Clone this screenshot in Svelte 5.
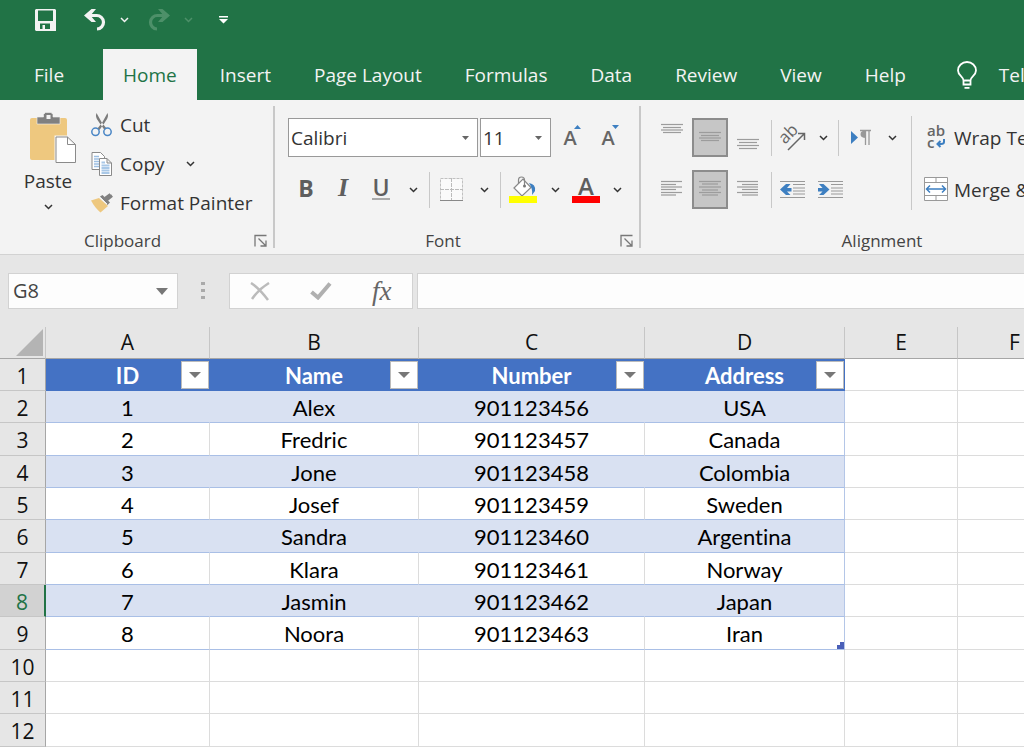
<script>
  const tabs = ["File", "Home", "Insert", "Page Layout", "Formulas", "Data", "Review", "View", "Help"];
  const columns = ["A", "B", "C", "D", "E", "F"];
  const fields = ["ID", "Name", "Number", "Address"];
  const people = [
    [1, "Alex", 901123456, "USA"],
    [2, "Fredric", 901123457, "Canada"],
    [3, "Jone", 901123458, "Colombia"],
    [4, "Josef", 901123459, "Sweden"],
    [5, "Sandra", 901123460, "Argentina"],
    [6, "Klara", 901123461, "Norway"],
    [7, "Jasmin", 901123462, "Japan"],
    [8, "Noora", 901123463, "Iran"]
  ];
  const emptyRows = [10, 11, 12];

  let activeTab = $state("Home");
  let cell = $state("G8");
  let formula = $state("");
  let vertical = $state("middle");
  let horizontal = $state("center");

  const selectedRow = $derived(Number(cell.replace(/\D/g, "")));
</script>

{#snippet chevron()}
  <svg width="9" height="6" viewBox="0 0 9 6"><path d="M1 1l3.500 3.500L8 1" fill="none" stroke="currentColor" stroke-width="1.500" /></svg>
{/snippet}

{#snippet more(label)}
  <button class="more" aria-label={label}>{@render chevron()}</button>
{/snippet}

{#snippet launcher(label)}
  <button class="launcher" aria-label={label}>
    <svg width="14" height="14" viewBox="0 0 14 14" fill="none" stroke="#777" stroke-width="1.300">
      <path d="M1 12.500V1.500H12.500M4.500 4.500l7 7M12 6.500V12H6.500" />
    </svg>
  </button>
{/snippet}

{#snippet lines(rows)}
  <svg width="22" height="40" viewBox="0 0 22 40" stroke="#9c9c9c" stroke-width="1.200">
    {#each rows as [x1, x2, y]}
      <path d="M{x1} {y}H{x2}" />
    {/each}
  </svg>
{/snippet}

<div class="app">
  <header>
    <div class="quick">
      <button aria-label="Save">
        <svg width="22" height="22" viewBox="0 0 22 22">
          <path fill="#f3f3f3" fill-rule="evenodd" d="M1 0H20L21 1V22H1L0 21V1ZM3 1.500V12H18V1.500ZM5 14.500V20H7.500V16H10V20H15V14.500Z" />
        </svg>
      </button>
      <button class="undo" aria-label="Undo">
        <svg width="22" height="22" viewBox="0 0 22 22">
          <path d="M5 6.500H12.500A6.500 6.500 0 0 1 13 20" fill="none" stroke="#f3f3f3" stroke-width="3.200" />
          <path d="M7.500 0H12L6.500 6.500 12 13H7.500L0 6.500Z" fill="#f3f3f3" />
        </svg>
      </button>
      <button class="drop" aria-label="Undo history">{@render chevron()}</button>
      <button class="redo" aria-label="Redo" disabled>
        <svg width="22" height="22" viewBox="0 0 22 22">
          <path d="M17 6.500H9.500A6.500 6.500 0 0 0 9 20" fill="none" stroke="#4d9069" stroke-width="3.200" />
          <path d="M14.500 0H10L15.500 6.500 10 13H14.500L22 6.500Z" fill="#4d9069" />
        </svg>
      </button>
      <button class="drop faded" aria-label="Redo history" disabled>{@render chevron()}</button>
      <button class="customize" aria-label="Customize toolbar">
        <svg width="9" height="8" viewBox="0 0 9 8" fill="#fff"><path d="M0 0h9v1.500H0zM0 3h9L4.500 7.500z" /></svg>
      </button>
    </div>
    <nav>
      {#each tabs as tab}
        <button class="tab" class:active={tab === activeTab} onclick={() => (activeTab = tab)}>{tab}</button>
      {/each}
      <button class="tell">
        <svg width="20" height="28" viewBox="0 0 20 28" fill="none" stroke="#fff" stroke-width="1.800">
          <path d="M6.500 19.500C6.500 15.500 1 14.500 1 9.500a9 8.500 0 0 1 18 0C19 14.500 13.500 15.500 13.500 19.500V23.500H6.500ZM6.500 19.500H13.500M7.500 26.800H12.500" />
        </svg>
        Tell me
      </button>
    </nav>
  </header>

  <div class="ribbon">
    <section class="group clipboard">
      <div class="body">
        <button class="paste">
          <svg width="46" height="52" viewBox="0 0 46 52">
            <rect x="0" y="6" width="37" height="42" rx="2" fill="#eec87f" />
            <path d="M7 5H13.500V2.500L15.500 0.500H21L23 2.500V5H30V12H7Z" fill="#808080" stroke="#f3f3f3" stroke-width="0.600" />
            <rect x="16.500" y="3" width="4" height="4" fill="#f3f3f3" />
            <path d="M26 25H38L45.500 32.500V50.500H26Z" fill="#fff" stroke="#f3f3f3" stroke-width="3" />
            <path d="M26 25H37.500L45.500 32.500V50.500H26ZM37.500 25V32.500H45.500" fill="#fff" stroke="#8a8a8a" />
          </svg>
          <span>Paste</span>
          {@render chevron()}
        </button>
        <div class="stack">
          <button>
            <svg width="22" height="24" viewBox="0 0 22 24">
              <path d="M5.500 0C4 4 6 6 8.500 10L13.500 17 15.500 15.500 10.500 9ZM16.500 0C18 4 16 6 13.500 10L8.500 17 6.500 15.500 11.500 9Z" fill="#7b7b7b" />
              <circle cx="4.500" cy="18.800" r="3.700" fill="none" stroke="#4a86c5" stroke-width="1.500" />
              <circle cx="16.500" cy="18.800" r="3.700" fill="none" stroke="#4a86c5" stroke-width="1.500" />
            </svg>
            Cut
          </button>
          <button>
            <svg width="22" height="24" viewBox="0 0 22 24">
              <path d="M1 .5H9.500L13.500 4.500V17.500H1Z" fill="#fff" stroke="#8a8a8a" />
              <path d="M3 4.500H8M3 7H8M3 9.500H8M3 12H8M3 14.500H8" stroke="#9dbfe2" stroke-width="1.500" />
              <path d="M8.500 6.500H16L20.500 11V23.500H8.500ZM16 6.500V11H20.500" fill="#fff" stroke="#8a8a8a" />
              <path d="M10.500 10.500H14M10.500 13.500H18.500M10.500 16H18.500M10.500 18.500H18.500M10.500 21H18.500" stroke="#a9c8e7" stroke-width="2" />
            </svg>
            Copy
            <span class="copy-more">{@render chevron()}</span>
          </button>
          <button>
            <svg width="22" height="20" viewBox="0 0 22 20">
              <path d="M0 7.500L8 5 17 13 9.500 19.500Q4 15 0 7.500Z" fill="#eec87f" />
              <path d="M9 3.500L11.500 2 19 9.500 16.500 12Z" fill="#808080" />
              <path d="M14 5.500L19.500 1.500M15.500 7L21 2.500" stroke="#808080" stroke-width="3" />
              <path d="M9.500 4.500L16 11" stroke="#f3f3f3" />
            </svg>
            Format Painter
          </button>
        </div>
      </div>
      <footer><span>Clipboard</span>{@render launcher("Clipboard settings")}</footer>
    </section>

    <section class="group font">
      <div class="body rows">
        <div class="row">
          <label class="picker family">
            <select aria-label="Font name"><option>Calibri</option></select>
            <svg width="7" height="4" viewBox="0 0 7 4"><path d="M0 0h7L3.500 4z" fill="#666" /></svg>
          </label>
          <label class="picker size">
            <select aria-label="Font size"><option>11</option></select>
            <svg width="7" height="4" viewBox="0 0 7 4"><path d="M0 0h7L3.500 4z" fill="#666" /></svg>
          </label>
          <button class="scale" aria-label="Increase font size">
            <span>A</span><svg width="7" height="4" viewBox="0 0 7 4"><path d="M0 4h7L3.500 0z" fill="#3d7fc1" /></svg>
          </button>
          <button class="scale" aria-label="Decrease font size">
            <span>A</span><svg width="7" height="4" viewBox="0 0 7 4"><path d="M0 0h7L3.500 4z" fill="#3d7fc1" /></svg>
          </button>
        </div>
        <div class="row">
          <button class="w36 bold">B</button>
          <button class="w38 italic">I</button>
          <button class="w38 underline"><span>U</span></button>
          {@render more("Underline styles")}
          <i class="sep"></i>
          <button class="w38" aria-label="Borders">
            <svg width="24" height="24" viewBox="0 0 24 24" fill="none">
              <rect x=".5" y=".5" width="22" height="22" fill="#fafafa" stroke="#c0c0c0" stroke-dasharray="3 1" />
              <path d="M11.500 0V22M0 11.500H23" stroke="#bbb" stroke-dasharray="4 1" />
              <path d="M0 22.500H23" stroke="#888" />
            </svg>
          </button>
          {@render more("Border styles")}
          <i class="sep"></i>
          <button class="w38" aria-label="Fill color">
            <svg width="28" height="28" viewBox="0 0 28 28">
              <path d="M5 12L14 3 22 11.500 13 20Z" fill="#fff" stroke="#888" stroke-width="1.200" />
              <path d="M9.500 8V4Q9.500 1 12.500 1T15.500 4V10" fill="none" stroke="#888" stroke-width="1.200" />
              <circle cx="15.500" cy="10" r="1.500" fill="#777" />
              <path d="M20 7Q27 8 26 15L23 19Q24 13 20 7Z" fill="#3d7fc1" />
              <rect y="20" width="28" height="7" fill="#ff0" />
            </svg>
          </button>
          {@render more("Fill colors")}
          <button class="w36 color" aria-label="Font color"><span>A</span></button>
          {@render more("Font colors")}
        </div>
      </div>
      <footer><span>Font</span>{@render launcher("Font settings")}</footer>
    </section>

    <section class="group alignment">
      <div class="body">
        <div class="rows">
          <div class="row">
            <button class="w40" class:on={vertical === "top"} aria-label="Top align" onclick={() => (vertical = "top")}>
              {@render lines([[0, 22, 6.5], [2, 20, 9.5], [0, 22, 12], [2, 20, 14.5]])}
            </button>
            <button class="w36" class:on={vertical === "middle"} aria-label="Middle align" onclick={() => (vertical = "middle")}>
              {@render lines([[0, 22, 14.5], [2, 20, 17.5], [0, 22, 20], [2, 20, 22.5]])}
            </button>
            <button class="w40" class:on={vertical === "bottom"} aria-label="Bottom align" onclick={() => (vertical = "bottom")}>
              {@render lines([[0, 22, 21.5], [2, 20, 24.5], [0, 22, 27.5], [2, 20, 30.5]])}
            </button>
            <i class="sep"></i>
            <button class="w36" aria-label="Orientation">
              <svg width="26" height="26" viewBox="0 0 26 26">
                <text x="3" y="19" transform="rotate(-45 5 17)" font-family="Open Sans, sans-serif" font-size="17" fill="#666">ab</text>
                <path d="M8 25L24 9M18 8.500H24.500V15" fill="none" stroke="#666" stroke-width="1.500" />
              </svg>
            </button>
            {@render more("Orientation options")}
            <i class="sep"></i>
            <button class="w38" aria-label="Text direction">
              <svg width="22" height="18" viewBox="0 0 22 18">
                <path d="M1 2L8 8.500 1 15Z" fill="#3d7fc1" />
                <path d="M15 2H16V9Q10.500 9 10.500 5.200T16 1.500Z" fill="#999" />
                <path d="M10 1.500H21M15.500 2V16M19 2V16" fill="none" stroke="#999" stroke-width="1.300" />
              </svg>
            </button>
            {@render more("Text direction options")}
          </div>
          <div class="row">
            <button class="w40" class:on={horizontal === "left"} aria-label="Align left" onclick={() => (horizontal = "left")}>
              {@render lines([[0, 21, 11.5], [0, 15, 14.5], [0, 21, 17], [0, 15, 19.5], [0, 21, 22.5], [0, 15, 25]])}
            </button>
            <button class="w36" class:on={horizontal === "center"} aria-label="Center" onclick={() => (horizontal = "center")}>
              {@render lines([[0, 22, 11.5], [3, 19, 14], [0, 22, 17], [3, 19, 20], [0, 22, 22.5], [3, 19, 25]])}
            </button>
            <button class="w40" class:on={horizontal === "right"} aria-label="Align right" onclick={() => (horizontal = "right")}>
              {@render lines([[0, 21, 11.5], [5, 21, 14.5], [0, 21, 17], [5, 21, 19.5], [0, 21, 22.5], [5, 21, 25]])}
            </button>
            <i class="sep"></i>
            <button class="w36" aria-label="Decrease indent">
              <svg width="26" height="20" viewBox="0 0 26 20">
                <path d="M0 1.500H25M13 4.500H25M13 8H25M13 11H25M13 14H25M0 17.500H25" stroke="#999" stroke-width="1.200" />
                <path d="M0 9.500L6 4H10.500L7 8H11.500V11.500H7L10.500 15H6Z" fill="#3d7fc1" />
              </svg>
            </button>
            <button class="w40" aria-label="Increase indent">
              <svg width="26" height="20" viewBox="0 0 26 20">
                <path d="M0 1.500H25M13 4.500H25M13 8H25M13 11H25M13 14H25M0 17.500H25" stroke="#999" stroke-width="1.200" />
                <path d="M11.500 9.500L5.500 4H1L4.500 8H0V11.500H4.500L1 15H5.500Z" fill="#3d7fc1" />
              </svg>
            </button>
          </div>
        </div>
        <div class="rows wide">
          <button>
            <svg width="24" height="28" viewBox="0 0 24 28">
              <text font-family="Open Sans, sans-serif" font-weight="600" font-size="15" fill="#666">
                <tspan x="3" y="12">ab</tspan><tspan x="3" y="24">c</tspan>
              </text>
              <path d="M20 15V18Q20 20 17 20H14M16.500 17L13.500 20 16.500 23" fill="none" stroke="#3d7fc1" stroke-width="2" />
            </svg>
            Wrap Text
          </button>
          <button>
            <svg width="24" height="26" viewBox="0 0 24 26" fill="none">
              <path d="M.5 .5H23.500V23.500H.5ZM.5 5.500H23.500M.5 18.500H23.500M12 .5V5.500M12 18.500V23.500" fill="#fff" stroke="#999" />
              <path d="M2.500 12H21.500M6 8.500L2.500 12 6 15.500M18 8.500L21.500 12 18 15.500" stroke="#3d7fc1" stroke-width="1.500" />
            </svg>
            Merge &amp; Center
          </button>
        </div>
      </div>
      <footer><span>Alignment</span>{@render launcher("Alignment settings")}</footer>
    </section>
  </div>

  <div class="formula-bar">
    <div class="name-box">
      <input aria-label="Name box" bind:value={cell} />
      <button aria-label="Named ranges">
        <svg width="12" height="7" viewBox="0 0 12 7"><path d="M0 0h12L6 7z" fill="#777" /></svg>
      </button>
    </div>
    <svg class="dots" width="4" height="18" viewBox="0 0 4 18" fill="#aaa"><path d="M0 0h4v3H0zM0 7h4v3H0zM0 14h4v3H0z" /></svg>
    <div class="actions">
      <button aria-label="Cancel">
        <svg width="20" height="19" viewBox="0 0 20 19"><path d="M1 1Q9 6 18 18M19 1Q9 7 2 17" fill="none" stroke="#bbb" stroke-width="2.500" /></svg>
      </button>
      <button aria-label="Enter">
        <svg width="22" height="18" viewBox="0 0 22 18"><path d="M1.500 10L8 15.500 20 1.500" fill="none" stroke="#b0b0b0" stroke-width="4" /></svg>
      </button>
      <button class="fx">fx</button>
    </div>
    <input class="formula" aria-label="Formula" bind:value={formula} />
  </div>

  <table>
    <colgroup>
      <col class="head" />
      {#each columns as name}
        <col class={name} />
      {/each}
    </colgroup>
    <thead>
      <tr>
        <td class="corner"><svg width="27" height="27" viewBox="0 0 27 27"><path d="M27 0V27H0z" fill="#b4b4b4" /></svg></td>
        {#each columns as name}
          <th scope="col">{name}</th>
        {/each}
      </tr>
    </thead>
    <tbody>
      <tr>
        <th scope="row">1</th>
        {#each fields as field}
          <td class="field">
            {field}
            <button aria-label="Filter {field}">
              <svg width="12" height="6" viewBox="0 0 12 6"><path d="M0 0h12L6 6z" fill="#777" /></svg>
            </button>
          </td>
        {/each}
        <td></td>
        <td></td>
      </tr>
      {#each people as person, i}
        <tr class:band={i % 2 === 0}>
          <th scope="row" class:selected={selectedRow === i + 2}>{i + 2}</th>
          {#each person as value}
            <td class="data">{value}</td>
          {/each}
          <td></td>
          <td></td>
        </tr>
      {/each}
      {#each emptyRows as n}
        <tr>
          <th scope="row">{n}</th>
          {#each columns as _}
            <td></td>
          {/each}
        </tr>
      {/each}
    </tbody>
  </table>
</div>

<style>
  :global(body) {
    margin: 0;
    overflow: hidden;
  }
  .app {
    overflow: hidden;
    background: #fff;
    color: #333;
    font-family: "Open Sans", "Noto Sans", sans-serif;
    font-size: 19px;
    line-height: 26px;
  }
  button {
    display: flex;
    align-items: center;
    justify-content: center;
    flex: none;
    padding: 0;
    border: 0;
    background: none;
    color: inherit;
    font: inherit;
    white-space: nowrap;
  }
  svg {
    display: block;
    flex: none;
  }

  header {
    background: #217346;
    color: #f3f3f3;
  }
  .quick {
    display: flex;
    align-items: center;
    height: 40px;
    padding-left: 35px;
  }
  .undo {
    margin-left: 27px;
  }
  .drop {
    width: 36px;
    height: 22px;
  }
  .redo {
    margin-left: 6px;
  }
  .faded {
    color: #4d9069;
  }
  .customize {
    margin-left: 13px;
  }
  nav {
    display: flex;
    gap: 3px;
    padding: 9px 0 0 14px;
  }
  .tab {
    height: 51px;
    padding: 0 20px;
  }
  .tab.active {
    background: #f3f3f3;
    color: #217346;
  }
  .tab:first-child {
    padding-right: 36px;
  }
  .tell {
    gap: 22px;
    margin-left: 28px;
  }

  .ribbon {
    display: flex;
    padding: 6px 0;
    overflow: hidden;
    background: #f3f3f3;
    border-bottom: 1px solid #d2d2d2;
  }
  .group {
    display: flex;
    flex: none;
    flex-direction: column;
    border-right: 2px solid #c8c8c8;
  }
  .clipboard {
    width: 273px;
  }
  .font {
    width: 364px;
  }
  .alignment {
    width: 510px;
  }
  .body {
    display: flex;
    height: 117px;
  }
  footer {
    display: flex;
    align-items: center;
    height: 25px;
    padding-right: 4px;
    font-size: 17px;
    color: #444;
  }
  footer span {
    flex: 1;
    padding-top: 10px;
    line-height: 26px;
    text-align: center;
  }
  .launcher {
    width: 16px;
    height: 16px;
    margin: 10px 0 0 8px;
  }
  .paste {
    flex-direction: column;
    justify-content: flex-start;
    width: 66px;
    margin-left: 15px;
    padding-top: 6px;
  }
  .paste svg:first-child {
    margin-left: 9px;
  }
  .paste span {
    line-height: 34px;
  }
  .paste svg:last-child {
    margin-top: 6px;
  }
  .stack {
    display: flex;
    flex-direction: column;
    align-items: flex-start;
    padding-left: 10px;
  }
  .stack button {
    gap: 7px;
    height: 39px;
    padding-bottom: 2px;
    box-sizing: border-box;
  }
  .copy-more {
    margin-left: 14px;
  }
  .rows {
    display: flex;
    flex-direction: column;
    gap: 13px;
    box-sizing: border-box;
    height: 117px;
    padding: 12px 0 0 13px;
  }
  .row {
    display: flex;
    align-items: center;
    height: 39px;
  }
  .row button {
    box-sizing: border-box;
    height: 39px;
  }
  .row button.on {
    background: #c6c6c6;
    border: 2px solid #8c8c8c;
  }
  .w36 {
    width: 36px;
  }
  .w38 {
    width: 38px;
  }
  .w40 {
    width: 40px;
  }
  .more {
    width: 24px;
  }
  .font .more {
    width: 26px;
  }
  .sep {
    width: 1px;
    height: 36px;
    margin: 0 3px;
    background: #c8c8c8;
  }
  .picker {
    position: relative;
    margin-right: 2px;
  }
  .picker select {
    width: 100%;
    height: 39px;
    padding: 0 2px;
    appearance: none;
    border: 1px solid #999;
    border-radius: 0;
    background: #fff;
    color: #333;
    font: inherit;
  }
  .picker svg {
    position: absolute;
    top: 18px;
    right: 9px;
    pointer-events: none;
  }
  .family {
    width: 190px;
  }
  .size {
    width: 71px;
  }
  .scale {
    width: 38px;
    color: #666;
    font-size: 20px;
    font-weight: 600;
  }
  .scale svg {
    align-self: flex-start;
    margin: 7px 0 0 -3px;
  }
  .row .bold,
  .row .italic,
  .row .underline {
    padding-bottom: 4px;
  }
  .bold {
    color: #5e5e5e;
    font-size: 23px;
    font-weight: 700;
  }
  .italic {
    color: #5e5e5e;
    font-family: "Liberation Serif", serif;
    font-size: 26px;
    font-style: italic;
    font-weight: 700;
  }
  .underline {
    color: #5e5e5e;
    font-size: 23px;
    font-weight: 600;
  }
  .underline span {
    border-bottom: 2px solid #aaa;
    line-height: 22px;
  }
  .color {
    color: #5e5e5e;
    font-size: 24px;
    font-weight: 600;
  }
  .color span {
    width: 28px;
    border-bottom: 7px solid #f00;
    line-height: 20px;
  }
  .wide {
    align-items: flex-start;
    margin-left: 7px;
    position: relative;
  }
  .wide::before {
    content: "";
    position: absolute;
    left: 0;
    top: 10px;
    width: 1px;
    height: 94px;
    background: #c8c8c8;
  }
  .wide button {
    gap: 6px;
    height: 39px;
  }
  .alignment .rows:first-child {
    padding-left: 11px;
  }

  .formula-bar {
    display: flex;
    align-items: center;
    padding: 18px 0 18px 8px;
    background: #e6e6e6;
  }
  .formula-bar input {
    min-width: 0;
    border: 0;
    outline: 0;
    background: #fdfdfd;
    color: #444;
    font: inherit;
  }
  .name-box,
  .actions {
    display: flex;
    box-sizing: border-box;
    height: 36px;
    border: 1px solid #d2d2d2;
    background: #fdfdfd;
  }
  .name-box {
    width: 170px;
  }
  .formula-bar .name-box input {
    flex: 1;
    padding: 0 4px;
    font-size: 20px;
  }
  .name-box button {
    width: 30px;
  }
  .dots {
    margin: 0 24px 0 23px;
  }
  .actions {
    width: 184px;
    margin-right: 4px;
  }
  .actions button {
    flex: 1;
  }
  .actions .fx {
    color: #666;
    font-family: "Liberation Serif", serif;
    font-size: 27px;
    font-style: italic;
  }
  .formula-bar .formula {
    flex: 1;
    box-sizing: border-box;
    height: 36px;
    border: 1px solid #d2d2d2;
    border-right: 0;
  }

  table {
    width: 1072px;
    border-spacing: 0;
    table-layout: fixed;
    color: #000;
    font-family: Lato, Carlito, sans-serif;
    font-size: 22px;
    font-variant-ligatures: none;
    line-height: 26px;
    text-align: center;
  }
  .head {
    width: 46px;
  }
  .A {
    width: 164px;
  }
  .B {
    width: 209px;
  }
  .C {
    width: 226px;
  }
  .D {
    width: 200px;
  }
  .E {
    width: 113px;
  }
  th,
  td {
    box-sizing: border-box;
    height: 32px;
    padding: 0;
    border-right: 1px solid #dcdcdc;
    border-bottom: 1px solid #dcdcdc;
  }
  tbody th,
  tbody td {
    padding-top: 2px;
  }
  tbody tr:nth-child(3n) > * {
    height: 33px;
  }
  th {
    background: #e6e6e6;
    border-color: #c6c6c6;
    color: #111;
    font-family: "Open Sans", "Noto Sans", sans-serif;
    font-size: 21px;
    font-weight: 400;
  }
  thead th,
  .corner {
    height: 32px;
    background: #e6e6e6;
    border-right-color: #c6c6c6;
    border-bottom-color: #a6a6a6;
  }
  thead th {
    padding-bottom: 2px;
  }
  .corner svg {
    margin: 0 2px 0 auto;
  }
  tbody th {
    border-right-color: #a6a6a6;
  }
  th.selected {
    background: #d2d2d2;
    border-right: 2px solid #217346;
    color: #217346;
  }
  .field {
    position: relative;
    background: #4472c4;
    border-color: #4472c4;
    color: #fff;
    font-weight: 700;
  }
  .field button {
    position: absolute;
    right: 0;
    top: 2px;
    width: 28px;
    height: 28px;
    background: #fff;
    border: 1px solid #bbb;
  }
  .data {
    border-bottom-color: #a9bfe6;
  }
  .band .data {
    background: #d9e1f2;
    border-right-color: #d9e1f2;
  }
  tr .data:nth-child(5) {
    border-right-color: #b4c6e7;
  }
  /* resize handle in the last cell of the list */
  tr:nth-child(9) .data:nth-child(5) {
    background:
      linear-gradient(#4a5fb8, #4a5fb8) right bottom / 7px 4px no-repeat,
      linear-gradient(#4a5fb8, #4a5fb8) right bottom / 4px 7px no-repeat;
  }
</style>
